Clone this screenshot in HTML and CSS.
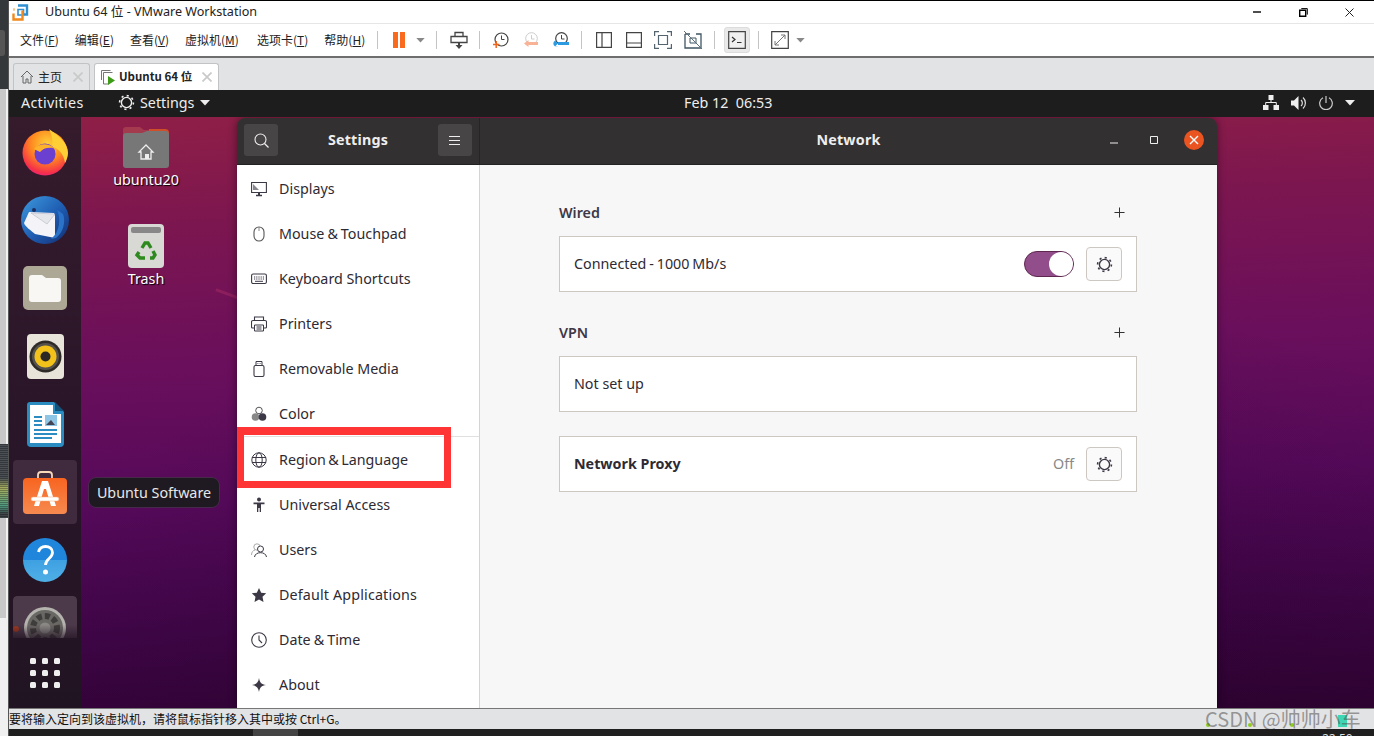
FILE: index.html
```html
<!DOCTYPE html>
<html lang="zh">
<head>
<meta charset="utf-8">
<title>Ubuntu 64 位 - VMware Workstation</title>
<link rel="stylesheet" href="styles.css">
</head>
<body>
<svg class="defs" width="0" height="0">
  <symbol id="gear" viewBox="0 0 16 16">
    <circle cx="8" cy="8" r="4.800" fill="none" stroke="currentColor" stroke-width="1.300"/>
    <circle cx="8" cy="8" r="6.500" fill="none" stroke="currentColor" stroke-width="1.500" stroke-dasharray="2 3.100"/>
  </symbol>
  <symbol id="plus" viewBox="0 0 12 12">
    <path d="M6 .5v11M.5 6h11" stroke="currentColor" stroke-width="1.100" fill="none"/>
  </symbol>
  <symbol id="caret" viewBox="0 0 10 6"><path d="M0 0h10L5 5.500z" fill="currentColor"/></symbol>
  <symbol id="close-x" viewBox="0 0 10 10"><path d="M.5.500l9 9M9.500.500l-9 9" stroke="#c9c9c9" stroke-width="1.700" fill="none"/></symbol>
</svg>
<div class="screen">
  <div class="gutter">
    <div class="g-dark"><span class="g-knob"></span></div>
    <div class="g-grey"><div class="g-meter"></div></div>
    <div class="g-light"></div>
  </div>
  <div class="vm">
    <header class="titlebar">
      <svg class="vm-logo" width="17" height="17" viewBox="0 0 17 17"><path d="M6 1.500h9v9h-3" fill="none" stroke="#2f8fd0" stroke-width="2.400"/><path d="M6 11V5.500h5.500V11H6z" fill="none" stroke="#2f8fd0" stroke-width="1.600"/><path d="M1.500 5.500h9v10h-9z" fill="none" stroke="#f08a1c" stroke-width="2.400" stroke-dasharray="24 9" stroke-dashoffset="-10"/></svg>
      <span class="title-text">Ubuntu 64 位 - VMware Workstation</span>
      <div class="win-btns">
        <span class="wb"><svg width="8" height="2"><path d="M0 1h8" stroke="#000" stroke-width="1.400"/></svg></span>
        <span class="wb"><svg width="9" height="9" viewBox="0 0 9 9"><path d="M.7 2.300h6v6h-6z" fill="none" stroke="#000" stroke-width="1.400"/><path d="M2.300.6h6v6" fill="none" stroke="#000"/></svg></span>
        <span class="wb"><svg width="9" height="9" viewBox="0 0 9 9"><path d="M.5.500l8 8M8.500.500l-8 8" stroke="#222" fill="none"/></svg></span>
      </div>
    </header>
    <nav class="toolbar">
      <div class="menu">
        <span>文件(<u>F</u>)</span><span>编辑(<u>E</u>)</span><span>查看(<u>V</u>)</span><span class="m-wide">虚拟机(<u>M</u>)</span><span>选项卡(<u>T</u>)</span><span>帮助(<u>H</u>)</span>
      </div>
      <i class="sep s1"></i>
      <span class="pause"><b></b><b></b></span>
      <svg class="tcaret c1"><use href="#caret"/></svg>
      <i class="sep s2"></i>
      <svg class="tool t-send" width="18" height="18" viewBox="0 0 18 18"><path d="M5 1.500h8v4H5zM1 5.500h16v6H1z" fill="none" stroke="#444" stroke-width="1.300"/><path d="M9 11v4" stroke="#444" stroke-width="2"/><path d="M5.500 14h7L9 18z" fill="#444"/></svg>
      <i class="sep s3"></i>
      <svg class="tool t-c1" width="16" height="17" viewBox="0 0 16 17"><circle cx="8.500" cy="7.500" r="6.500" fill="none" stroke="#444" stroke-width="1.200"/><path d="M8.500 3.500v4h3" fill="none" stroke="#444"/><path d="M0 12.500h6.500M3.200 9v7" stroke="#f0651e" stroke-width="1.500"/></svg>
      <svg class="tool t-c2" width="16" height="17" viewBox="0 0 16 17"><circle cx="8.500" cy="6.500" r="5.800" fill="none" stroke="#ccc"/><path d="M8.500 3v4h3" fill="none" stroke="#ccc"/><path d="M15 11.500H3" stroke="#f8b295" stroke-width="3"/><path d="M5.500 8L1 11.500 5.500 15z" fill="#f8b295"/></svg>
      <svg class="tool t-c3" width="16" height="17" viewBox="0 0 16 17"><circle cx="8.500" cy="6.500" r="5.800" fill="none" stroke="#444" stroke-width="1.200"/><path d="M8.500 3v4h3" fill="none" stroke="#444"/><path d="M16 11.500H5" stroke="#2c9ae0" stroke-width="3"/><path d="M5 8.500a3.300 3.300 0 1 0 0 6h-3l3-3-3-3z" fill="#2c9ae0"/></svg>
      <i class="sep s4"></i>
      <svg class="tool t-p1" width="16" height="16" viewBox="0 0 16 16"><path d="M.6.600h14.800v14.800H.6zM6 .6v14.800" fill="none" stroke="#444" stroke-width="1.200"/></svg>
      <svg class="tool t-p2" width="16" height="16" viewBox="0 0 16 16"><path d="M.6.600h14.800v14.800H.6zM.6 11h14.800" fill="none" stroke="#444" stroke-width="1.200"/></svg>
      <svg class="tool t-p3" width="18" height="18" viewBox="0 0 18 18"><path d="M.6 5V.6H5M13 .6h4.400V5M17.400 13v4.400H13M5 17.400H.6V13" fill="none" stroke="#53646e" stroke-width="1.200"/><path d="M4.500 4.500h9v9h-9z" fill="none" stroke="#53646e" stroke-width="1.200"/></svg>
      <svg class="tool t-p4" width="18" height="18" viewBox="0 0 18 18"><path d="M1 3h5M12 3h5v14H1V3" fill="none" stroke="#3f5663" stroke-width="1.300"/><path d="M6 7h6v5H6z" fill="none" stroke="#3f5663"/><path d="M0 0l18 18" stroke="#58707d"/></svg>
      <i class="sep s5"></i>
      <span class="term"><svg width="18" height="18" viewBox="0 0 18 18"><path d="M.7.700h16.600v16.600H.7z" fill="#f0f0f0" stroke="#444" stroke-width="1.200"/><path d="M4 6l3 2.500L4 11" fill="none" stroke="#333" stroke-width="1.200"/><path d="M9 11.500h4.500" stroke="#333"/></svg></span>
      <i class="sep s6"></i>
      <svg class="tool t-full" width="18" height="18" viewBox="0 0 18 18"><path d="M.7.700h16.600v16.600H.7z" fill="none" stroke="#444" stroke-width="1.200"/><path d="M4 14L14 4M10 4h4v4M4 10v4h4" fill="none" stroke="#777"/></svg>
      <svg class="tcaret c2"><use href="#caret"/></svg>
    </nav>
    <div class="tabs">
      <div class="tab tab-home">
        <svg width="14" height="14" viewBox="0 0 14 14"><path d="M1 7l6-6 6 6M3 6v7h3V9h2v4h3V6" fill="none" stroke="#666"/></svg>
        <span class="tab-label">主页</span><svg class="tab-x" width="10" height="10"><use href="#close-x"/></svg>
      </div>
      <div class="tab tab-vm">
        <svg width="15" height="15" viewBox="0 0 15 15"><path d="M.5 10V.5h9M2.500 2.500h9M2.500 2.500V14h5" fill="none" stroke="#777"/><path d="M7 6l7 4.500L7 15z" fill="#3d9b18"/></svg>
        <strong class="tab-label">Ubuntu 64 位</strong><svg class="tab-x" width="10" height="10"><use href="#close-x"/></svg>
      </div>
    </div>
    <div class="guest">
      <div class="topbar">
        <span class="activities">Activities</span>
        <span class="appmenu"><svg class="ic16" width="17" height="17"><use href="#gear"/></svg>Settings<svg class="cr" width="10" height="6"><use href="#caret"/></svg></span>
        <span class="clock">Feb 12&nbsp;&nbsp;06:53</span>
        <span class="tray">
          <svg width="16" height="15" viewBox="0 0 16 15"><path d="M5.500 0h5v5h-5zM0 10h5.500v5H0zM10.500 10H16v5h-5.500z" fill="#eee"/><path d="M8 5v3M2.700 10V7.500h10.600V10" fill="none" stroke="#eee"/></svg>
          <svg width="16" height="14" viewBox="0 0 16 14"><path d="M0 4.500h3L7.500 0v14L3 9.500H0z" fill="#eee"/><path d="M10 4a4 4 0 0 1 0 6M12 1.500a7.500 7.500 0 0 1 0 11" fill="none" stroke="#ddd" stroke-width="1.200"/></svg>
          <svg width="14" height="14" viewBox="0 0 14 14"><path d="M4 1.800a6.300 6.300 0 1 0 6 0" fill="none" stroke="#ccc" stroke-width="1.200"/><path d="M7 0v7" stroke="#ccc" stroke-width="1.200"/></svg>
          <svg width="10" height="6"><use href="#caret"/></svg>
        </span>
      </div>
      <div class="desk">
        <aside class="dock">
          <div class="dock-list">
            <div class="dk">
              <svg width="46" height="48" viewBox="0 0 46 48"><defs><radialGradient id="ff" cx=".55" cy=".3" r=".8"><stop offset="0" stop-color="#ffd23a"/><stop offset=".45" stop-color="#ff8a1f"/><stop offset=".8" stop-color="#f5304a"/><stop offset="1" stop-color="#e3189a"/></radialGradient></defs><circle cx="23" cy="25" r="22.500" fill="url(#ff)"/><path d="M27 1c10 7 19 14 19 24 0 4-2 8-3 10-1-8-6-15-13-16 1-6 0-12-3-18z" fill="#ffcf35"/><circle cx="23" cy="26" r="10.500" fill="#6b3fd0"/><path d="M12 21c5-6 15-6 20-1-6-1-11 0-14 4z" fill="#ffb22c"/></svg>
            </div>
            <div class="dk">
              <svg width="48" height="48" viewBox="0 0 48 48"><defs><linearGradient id="tb" x1="0" y1="0" x2="1" y2="1"><stop offset="0" stop-color="#3f9be0"/><stop offset=".55" stop-color="#1d5bb0"/><stop offset="1" stop-color="#152c70"/></linearGradient></defs><circle cx="24" cy="24" r="24" fill="url(#tb)"/><path d="M8 16l25 1 1 3 0 22-20-4C9 34 4 30 3 27z" fill="#f4f4f8"/><path d="M10 17l24 1-8 10z" fill="#e5e6ec" stroke="#aab" stroke-width=".5"/><path d="M36 14c4 8 3 22-6 29l5-1c7-5 10-16 7-24z" fill="#2a73c8"/><circle cx="13" cy="14" r="2" fill="#1a2f60"/></svg>
            </div>
            <div class="dk">
              <svg width="44" height="44" viewBox="0 0 44 44"><rect width="44" height="44" rx="5" fill="#ada796"/><path d="M6 12a3 3 0 0 1 3-3h10l4 3h12a3 3 0 0 1 3 3v18a3 3 0 0 1-3 3H9a3 3 0 0 1-3-3z" fill="#f8f7f4"/></svg>
            </div>
            <div class="dk">
              <svg width="37" height="45" viewBox="0 0 37 45"><rect width="37" height="45" rx="4" fill="#e8e4da"/><circle cx="18.500" cy="22.500" r="16" fill="#2d2a28"/><circle cx="18.500" cy="22.500" r="13.500" fill="#55524e"/><circle cx="18.500" cy="22.500" r="11" fill="#f2c21a"/><circle cx="18.500" cy="22.500" r="5" fill="#2b2826"/></svg>
            </div>
            <div class="dk">
              <svg width="37" height="45" viewBox="0 0 37 45"><path d="M3 0h24l10 10v31a4 4 0 0 1-4 4H4a4 4 0 0 1-4-4V3a3 3 0 0 1 3-3z" fill="#2a8cc0"/><path d="M3 3h23v9h8v29H3z" fill="#fff"/><path d="M28 0l9 9h-9z" fill="#13527a"/><path d="M7 15h8M7 19h8M7 23h8M7 28h23M7 32h23M7 36h18" stroke="#2a8cc0" stroke-width="2"/><path d="M18 13h12v11H18z" fill="#8fc6e6"/><path d="M19 23l5-5 4 5z" fill="#445"/></svg>
            </div>
            <div class="dk active">
              <svg width="44" height="43" viewBox="0 0 44 43"><defs><linearGradient id="sw" x1="0" y1="0" x2="0" y2="1"><stop offset="0" stop-color="#f86420"/><stop offset="1" stop-color="#f68a50"/></linearGradient></defs><path d="M15 7V4a3 3 0 0 1 3-3h8a3 3 0 0 1 3 3v3" fill="none" stroke="#f8d8b8" stroke-width="1.800"/><rect y="7" width="44" height="36" rx="4" fill="url(#sw)"/><path d="M19 10h6l8 25h-5l-5-17h-2l-5 17h-5z" fill="#fff"/><rect x="8" y="26" width="28" height="4" rx="2" fill="#fff" stroke="#f7a070" stroke-width=".5"/></svg>
            </div>
            <div class="dk">
              <svg width="44" height="44" viewBox="0 0 44 44"><defs><linearGradient id="hp" x1="0" y1="0" x2="0" y2="1"><stop offset="0" stop-color="#1f86dc"/><stop offset=".5" stop-color="#1f86dc"/><stop offset=".5" stop-color="#3fa0e2"/><stop offset="1" stop-color="#4fb0e6"/></linearGradient></defs><circle cx="22" cy="22" r="22" fill="url(#hp)"/><path d="M15.500 14c1-4 4-5.500 7-5.500 4 0 7 2.500 7 6 0 6-7 6-7 12.500" fill="none" stroke="#fff" stroke-width="2.800"/><circle cx="22.500" cy="34" r="2.500" fill="#fff"/></svg>
            </div>
            <div class="dk active fade">
              <span class="run-dot"></span>
              <svg width="44" height="44" viewBox="0 0 44 44"><circle cx="22" cy="22" r="21" fill="#b5b3ae"/><circle cx="22" cy="22" r="18" fill="#6a6865"/><circle cx="22" cy="22" r="12" fill="none" stroke="#3f3d3b" stroke-width="6" stroke-dasharray="5 3"/><circle cx="22" cy="22" r="5.500" fill="#8a8885"/></svg>
            </div>
          </div>
          <div class="apps"><i></i><i></i><i></i><i></i><i></i><i></i><i></i><i></i><i></i></div>
        </aside>
        <div class="streak"></div>
        <div class="icon icon-home">
          <svg width="46" height="42" viewBox="0 0 46 42"><path d="M0 4a3 3 0 0 1 3-3h14l4 3h21a4 4 0 0 1 4 4v8H0z" fill="#a33a4e"/><path d="M26 3h16a4 4 0 0 1 4 4v8H26z" fill="#cf5028"/><path d="M0 10a3 3 0 0 1 3-3h16l5-2h18a4 4 0 0 1 4 4v30a3 3 0 0 1-3 3H3a3 3 0 0 1-3-3z" fill="#777"/><path d="M23 19l-7 7h2v7h10v-7h2z" fill="none" stroke="#eee" stroke-width="1.300"/><path d="M22 28h4v5h-4z" fill="#eee"/></svg>
          <span>ubuntu20</span>
        </div>
        <div class="icon icon-trash">
          <svg width="36" height="44" viewBox="0 0 36 44"><rect width="36" height="44" rx="4" fill="#d8d8d4"/><rect x="3" y="3" width="30" height="6" rx="2" fill="#888"/><g fill="none" stroke="#2e8a1e" stroke-width="3.400"><path d="M11 28l-2 3 3 3h5M14 24l3-5h3l3 5M22 34h3l2-3-2-4"/></g></svg>
          <span>Trash</span>
        </div>
        <div class="tooltip">Ubuntu Software</div>
        <section class="settings">
          <header class="hdr">
            <div class="hdr-left">
              <button class="hbtn"><svg width="15" height="15" viewBox="0 0 15 15"><circle cx="6.500" cy="6.500" r="5.500" fill="none" stroke="#eee" stroke-width="1.100"/><path d="M10.500 10.500l4 4" stroke="#eee" stroke-width="1.200"/></svg></button>
              <span class="hdr-title">Settings</span>
              <button class="hbtn"><svg width="11" height="9" viewBox="0 0 11 9"><path d="M0 .5h11M0 4.500h11M0 8.500h11" stroke="#eee"/></svg></button>
            </div>
            <div class="hdr-right">
              <span class="hdr-title net">Network</span>
              <span class="ctl ctl-min"><svg width="8" height="2"><path d="M0 1h8" stroke="#eee"/></svg></span>
              <span class="ctl ctl-max"><svg width="8" height="8"><path d="M.5.500h7v7h-7z" fill="none" stroke="#eee"/></svg></span>
              <span class="ctl ctl-close"><svg width="10" height="10" viewBox="0 0 10 10"><path d="M1 1l8 8M9 1l-8 8" stroke="#fff" stroke-width="1.400"/></svg></span>
            </div>
          </header>
          <div class="body">
            <ul class="side">
              <li><svg width="16" height="16" viewBox="0 0 16 16"><path d="M.6 1.500h14.800v10H.6z" fill="none" stroke="#3d3846" stroke-width="1.100"/><path d="M2 3l6 6H2z" fill="#8a8690"/><path d="M5 14.500h6" stroke="#3d3846" stroke-width="1.500"/><path d="M7 11.500h2v3H7z" fill="#3d3846"/></svg>Displays</li>
              <li class="amp"><svg width="16" height="16" viewBox="0 0 16 16"><rect x="3" y="1" width="10" height="14" rx="5" fill="none" stroke="#555" stroke-width="1.100"/><path d="M8 1v4" stroke="#888"/></svg>Mouse &amp; Touchpad</li>
              <li><svg width="16" height="16" viewBox="0 0 16 16"><rect x=".6" y="3" width="14.800" height="9.500" rx="1.500" fill="none" stroke="#3d3846" stroke-width="1.100"/><path d="M3 6h10M3 8h10" stroke="#3d3846" stroke-dasharray="1 .8"/><path d="M4 10.300h8" stroke="#3d3846"/></svg>Keyboard Shortcuts</li>
              <li><svg width="16" height="16" viewBox="0 0 16 16"><path d="M3.500 5V1h9v4M3 12H1.500a1 1 0 0 1-1-1V6a1.500 1.500 0 0 1 1.500-1.500h12A1.500 1.500 0 0 1 15.500 6v5a1 1 0 0 1-1 1H13" fill="none" stroke="#3d3846" stroke-width="1.100"/><path d="M3.500 9h9v6h-9zM5.500 11h5M5.500 13h5" fill="none" stroke="#3d3846"/></svg>Printers</li>
              <li><svg width="16" height="16" viewBox="0 0 16 16"><rect x="3" y="4.500" width="10" height="11" rx="1.500" fill="none" stroke="#3d3846" stroke-width="1.100"/><path d="M5 4.500V.5h6v4M6.500 2.500h.8M8.700 2.500h.8" fill="none" stroke="#3d3846"/></svg>Removable Media</li>
              <li><svg width="16" height="16" viewBox="0 0 16 16"><circle cx="8" cy="4.500" r="3.300" fill="none" stroke="#555"/><circle cx="4.500" cy="11" r="3.800" fill="#888"/><circle cx="11.500" cy="11" r="3.800" fill="#3d3846"/></svg>Color</li>
              <li class="split tight"><svg width="16" height="16" viewBox="0 0 16 16"><circle cx="8" cy="8" r="7.200" fill="none" stroke="#3d3846"/><ellipse cx="8" cy="8" rx="3.200" ry="7.200" fill="none" stroke="#3d3846"/><path d="M1 5.500h14M1 10.500h14" stroke="#3d3846"/></svg>Region &amp; Language</li>
              <li><svg width="16" height="16" viewBox="0 0 16 16"><circle cx="8" cy="2.500" r="2" fill="#3d3846"/><path d="M2.500 5.500h11v1.800H10V15H8.700v-4H7.300v4H6V7.300H2.500z" fill="#3d3846"/></svg>Universal Access</li>
              <li><svg width="16" height="16" viewBox="0 0 16 16"><circle cx="6" cy="5" r="3.200" fill="none" stroke="#aaa"/><path d="M.5 13c0-3 1.500-4.500 3.500-5" fill="none" stroke="#aaa"/><circle cx="9.500" cy="7" r="3" fill="#fff" stroke="#3d3846"/><path d="M3.500 15c.5-3 3-4.300 6-4.300s5.500 1.300 6 4.300" fill="none" stroke="#3d3846"/></svg>Users</li>
              <li class="wide"><svg width="16" height="16" viewBox="0 0 16 16"><path d="M8 1l2.200 4.700 5 .6-3.700 3.500 1 5.200L8 12.400 3.500 15l1-5.200L.8 6.300l5-.6z" fill="#3d3846"/></svg>Default Applications</li>
              <li class="amp"><svg width="16" height="16" viewBox="0 0 16 16"><circle cx="8" cy="8" r="7.300" fill="none" stroke="#3d3846" stroke-width="1.100"/><path d="M8 3.500V8l3 3" fill="none" stroke="#3d3846" stroke-width="1.100"/></svg>Date &amp; Time</li>
              <li><svg width="16" height="16" viewBox="0 0 16 16"><path d="M8 1c.6 4.400 2.600 6.400 7 7-4.400.6-6.400 2.600-7 7-.6-4.400-2.600-6.400-7-7 4.400-.6 6.400-2.600 7-7z" fill="#3d3846"/></svg>About</li>
            </ul>
            <main class="panel">
              <div class="column">
                <div class="label-row"><span>Wired</span><svg width="11" height="11"><use href="#plus"/></svg></div>
                <div class="card">
                  <span class="grow speed">Connected - 1000 Mb/s</span>
                  <span class="toggle"><i></i></span>
                  <span class="gear-btn"><svg width="17" height="17"><use href="#gear"/></svg></span>
                </div>
                <div class="label-row vpn"><span>VPN</span><svg width="11" height="11"><use href="#plus"/></svg></div>
                <div class="card"><span class="grow">Not set up</span></div>
                <div class="card proxy">
                  <strong class="grow">Network Proxy</strong>
                  <span class="off">Off</span>
                  <span class="gear-btn"><svg width="17" height="17"><use href="#gear"/></svg></span>
                </div>
              </div>
            </main>
          </div>
        </section>
        <div class="redbox"></div>
      </div>
      <div class="statusbar">
        <span>要将输入定向到该虚拟机，请将鼠标指针移入其中或按 Ctrl+G。</span>
        <span class="st-icons"><i></i><i></i><i></i><em></em></span>
        <span class="watermark">CSDN @帅帅小车</span>
      </div>
      <div class="hostbar"><span class="host-seg"></span><span class="host-time">22:50</span></div>
    </div>
  </div>
</div>
</body>
</html>
```
FILE: styles.css
```css
* { box-sizing: border-box; }
html, body { margin: 0; height: 100%; overflow: hidden; }
body { font-family: "Noto Sans", "Noto Sans CJK SC", sans-serif; background: #fff; }
.defs { position: absolute; }
ul { list-style: none; margin: 0; padding: 0; }
button { border: 0; padding: 0; font: inherit; }
svg { display: block; flex: none; }

.screen { display: flex; width: 1374px; height: 736px; }

.gutter { width: 8px; display: flex; flex-direction: column; flex: none; }
.g-dark { height: 89px; background: #35383a; padding-top: 30px; }
.g-knob { display: block; width: 5px; height: 26px; background: #555; border-radius: 0 3px 3px 0; }
.g-grey { height: 529px; background: linear-gradient(90deg, #c8c8c8 0 6px, #f0f0f0 6px); padding-top: 355px; }
.g-meter { height: 74px; background: repeating-linear-gradient(180deg, rgba(0,0,0,.3) 0 1px, transparent 1px 2px), linear-gradient(180deg, #4a5055 0 34px, #a8b060 44px, #4f9a80 62px, #3f4549 70px); }
.g-light { flex: 1; background: #f0f0f0; }

.vm { flex: 1; display: flex; flex-direction: column; border-top: 1px solid #000; border-left: 1px solid #555; min-width: 0; }
.titlebar { height: 22px; display: flex; align-items: center; background: #fff; padding-left: 3px; padding-right: 1px; }
.vm-logo { margin-top: 1px; }
.title-text { margin-left: 16px; font: 12.600px/1 "Noto Sans", "Noto Sans CJK SC", sans-serif; color: #222; }
.win-btns { margin-left: auto; display: flex; }
.wb { width: 46.500px; height: 22px; display: flex; align-items: center; justify-content: center; }

.toolbar { height: 35px; position: relative; display: flex; align-items: center; background: #fff; border-top: 1px solid #e6e6e6; border-bottom: 2px solid #6e6e6e; padding-left: 11px; }
.menu { display: flex; gap: 16px; font: 12px/1 "Noto Sans CJK SC", "Noto Sans", sans-serif; color: #222; width: 357px; flex: none; }
.m-wide { min-width: 56px; }
.sep { width: 1px; height: 18px; background: #c4c4c4; flex: none; }
.pause { display: flex; gap: 2px; margin-left: 15px; flex: none; }
.pause b { width: 5px; height: 16px; background: #fa6a1e; }
.tcaret { width: 9px; height: 5px; color: #888; flex: none; }
.c1 { margin-left: 11px; }
.s2 { margin-left: 11px; }
.t-send { margin-left: 13px; }
.s3 { margin-left: 11px; }
.t-c1 { margin-left: 13px; }
.t-c2 { margin-left: 14px; }
.t-c3 { margin-left: 14px; }
.s4 { margin-left: 12px; }
.t-p1 { margin-left: 14px; }
.t-p2 { margin-left: 14px; }
.t-p3 { margin-left: 12px; }
.t-p4 { margin-left: 12px; }
.s5 { margin-left: 12px; }
.term { margin-left: 9px; width: 26px; height: 26px; background: #e9e9e9; border: 1px solid #dcdcdc; border-radius: 3px; display: flex; align-items: center; justify-content: center; flex: none; }
.s6 { margin-left: 8px; }
.t-full { margin-left: 12px; }
.c2 { margin-left: 7px; }

.tabs { height: 32px; background: #e2e3e5; display: flex; align-items: flex-end; padding-left: 4px; gap: 4px; }
.tab { height: 27px; border: 1px solid #c2c3c5; border-bottom: 0; border-radius: 3px 3px 0 0; display: flex; align-items: center; font: 12px/1 "Noto Sans CJK SC", "Noto Sans", sans-serif; color: #222; }
.tab-home { width: 77px; padding-left: 6px; }
.tab-vm { width: 125px; padding-left: 6px; background: #fff; }
.tab-label { margin-left: 4px; white-space: nowrap; }
.tab-vm .tab-label { margin-left: 3px; font-size: 11.500px; }
.tab-home .tab-x { margin-left: 11px; }
.tab-vm .tab-x { margin-left: 10px; }

.guest { flex: 1; display: flex; flex-direction: column; min-height: 0; }
.topbar { height: 27px; background: #1d1d1d; color: #eee; display: flex; align-items: center; position: relative; font-size: 14.300px; padding: 0 0 2px 12px; }
.activities { width: 97px; letter-spacing: .3px; }
.appmenu { display: flex; align-items: center; gap: 5px; }
.cr { margin-left: 1px; }
.clock { position: absolute; left: 675px; }
.tray { margin-left: auto; margin-right: 19px; display: flex; align-items: center; gap: 12px; color: #eee; }

.desk { height: 591px; position: relative; overflow: hidden; display: flex;
  background:
    radial-gradient(ellipse 900px 500px at 60% 110%, rgba(30,0,30,.35), transparent),
    linear-gradient(178deg, #8f1f46 0, #7c1650 18%, #6a0f5c 40%, #55095a 62%, #3f0547 82%, #2f0233 100%); }
.dock { width: 72px; flex: none; display: flex; flex-direction: column; background: linear-gradient(180deg, #351b2c 0, #2a1629 50%, #211422 100%); }
.dock-list { height: 521px; padding-top: 1px; overflow: hidden; flex: none; display: flex; flex-direction: column; }
.dk { width: 64px; height: 64px; margin: 2px 4px; display: flex; align-items: center; justify-content: center; position: relative; border-radius: 4px; flex: none; }
.dk.active { background: #402b3e; }
.dk.fade { background: #4c3a4b; -webkit-mask-image: linear-gradient(180deg, #000 45%, rgba(0,0,0,.3) 65%); mask-image: linear-gradient(180deg, #000 45%, rgba(0,0,0,.3) 65%); }
.run-dot { position: absolute; left: 0; top: 30px; width: 6px; height: 6px; border-radius: 50%; background: #a03a20; }
.apps { flex: 1; display: grid; grid-template-columns: repeat(3, 6px); gap: 6px; align-content: center; justify-content: center; }
.apps i { height: 6px; background: #eee; border-radius: 1.500px; }

.streak { position: absolute; left: 206px; top: 176px; width: 28px; height: 3px; background: rgba(200,60,110,.3); transform: rotate(20deg); }
.icon { position: absolute; display: flex; flex-direction: column; align-items: center; color: #fff; font-size: 14.300px; line-height: 20px; text-shadow: 1px 1px 1px #000; width: 90px; }
.icon-home { left: 92px; top: 9px; gap: 2px; }
.icon-trash { left: 92px; top: 107px; gap: 1px; }
.tooltip { position: absolute; left: 79px; top: 360px; width: 132px; height: 31px; padding-bottom: 1px; border: 1px solid #47294c; border-radius: 8px; background: #1f1a21; color: #e8e8e8; font-size: 14.300px; display: flex; align-items: center; justify-content: center; }

.settings { position: absolute; left: 228px; top: 1px; width: 980px; height: 590px; display: flex; flex-direction: column; border-radius: 8px 8px 0 0; overflow: hidden; box-shadow: 0 0 8px rgba(0,0,0,.45); }
.hdr { height: 47px; display: flex; background: #333031; color: #eee; border-bottom: 1px solid #222; flex: none; }
.hdr-left { width: 243px; display: flex; align-items: center; justify-content: space-between; padding: 0 7px 2px; border-right: 1px solid #262425; flex: none; }
.hdr-right { flex: 1; position: relative; display: flex; align-items: center; justify-content: center; padding-bottom: 2px; }
.hdr-title { font-weight: 700; font-size: 14.300px; letter-spacing: .2px; margin-bottom: 2px; }
.hbtn { width: 34px; height: 32px; border-radius: 3px; background: #474546; display: flex; align-items: center; justify-content: center; }
.ctl { position: absolute; top: 22px; transform: translateY(-50%); display: flex; align-items: center; justify-content: center; }
.ctl-min { left: 630px; top: 25px; }
.ctl-max { left: 670px; }
.ctl-close { left: 704px; width: 20px; height: 20px; border-radius: 50%; background: #e95420; }

.body { flex: 1; display: flex; min-height: 0; }
.side { width: 243px; padding-top: 1px; background: #fff; border-right: 1px solid #d6d3d0; flex: none; color: #2e2a33; font-size: 14.300px; }
.side li { height: 45px; display: flex; align-items: center; gap: 12px; padding-left: 14px; white-space: pre; }
.side li.split { border-top: 1px solid #e2e0de; height: 46px; }
.side li.amp { word-spacing: -.7px; }
.side li.tight { word-spacing: -1.300px; }
.side li.wide { letter-spacing: .15px; }
.panel { flex: 1; background: #f7f7f7; padding-top: 37px; color: #2e2a33; font-size: 14.300px; }
.column { width: 578px; margin: 0 0 0 79px; }
.label-row { height: 20px; margin-bottom: 14px; display: flex; align-items: center; justify-content: space-between; padding-right: 12px; font-weight: 600; color: #3d3846; }
.label-row svg { color: #333; }
.vpn { margin-top: 30px; }
.card { height: 56px; display: flex; align-items: center; padding: 0 14px; background: #fff; border: 1px solid #cdc7c2; }
.grow { flex: 1; margin-bottom: 2px; }
.speed { word-spacing: -.8px; }
.proxy { margin-top: 24px; }
.toggle { width: 50px; height: 26px; border-radius: 13px; background: #924d8b; border: 1px solid #5e2750; display: flex; justify-content: flex-end; }
.toggle i { width: 24px; height: 24px; border-radius: 50%; background: #fff; }
.gear-btn { width: 36px; height: 34px; margin-left: 12px; border: 1px solid #cdc7c2; border-radius: 4px; background: #fafafa; display: flex; align-items: center; justify-content: center; color: #3d3846; }
.off { color: #888; margin-bottom: 2px; }

.redbox { position: absolute; left: 228px; top: 310px; width: 214px; height: 61px; border: solid #ff3535; border-width: 8px 7px 7px 7px; pointer-events: none; }

.statusbar { height: 21px; position: relative; background: #e2e3e5; border-top: 1px solid #777; font: 12px/20px "Noto Sans CJK SC", "Noto Sans", sans-serif; color: #111; }
.st-icons { position: absolute; left: 1197px; top: 14px; display: flex; gap: 38px; }
.st-icons i { width: 4px; height: 4px; border-radius: 50%; background: #8fcc1e; }
.st-icons em { width: 9px; height: 12px; margin: -8px 0 0 6px; background: #3fd6b4; }
.watermark { position: absolute; left: 1196px; top: 0; font-size: 20px; line-height: 20px; color: rgba(80,80,80,.55); white-space: nowrap; }
.hostbar { flex: 1; background: #1f1f1f; position: relative; overflow: hidden; }
.host-seg { position: absolute; left: 244px; top: 0; width: 45px; height: 8px; background: #444; }
.host-time { position: absolute; left: 1313px; top: 3px; color: #ddd; font-size: 12px; line-height: 14px; }
```
